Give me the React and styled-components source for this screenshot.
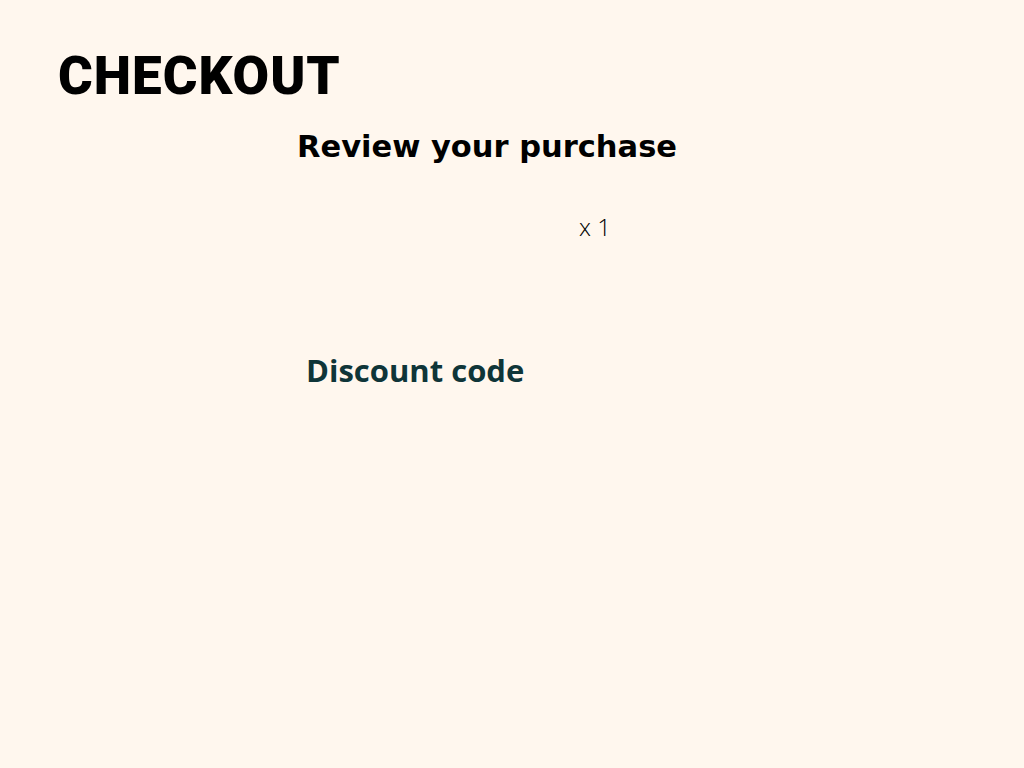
import React from "react";
import styled, { createGlobalStyle } from "styled-components";

const Global = createGlobalStyle`
  html, body { margin: 0; padding: 0; background: #fff7ee; }
  body { font-family: "DejaVu Sans", "Noto Sans", sans-serif; }
`;

const Page = styled.div`
  min-height: 768px;
  background: #fff7ee;
  padding: 44px 58px 0;
  box-sizing: border-box;
`;

const Title = styled.h1`
  margin: 0;
  font-family: Roboto, "DejaVu Sans", sans-serif;
  font-weight: 900;
  font-size: 53px;
  line-height: 64px;
  letter-spacing: 1px;
  color: #000;
`;

const Column = styled.main`
  width: 430px;
  margin: 17px auto 0;
  display: flex;
  flex-direction: column;
`;

const SectionTitle = styled.h2`
  margin: 0;
  font-family: "DejaVu Sans", sans-serif;
  font-weight: 700;
  font-size: 30.5px;
  line-height: 44px;
  color: #000;
`;

const ItemRow = styled.div`
  display: flex;
  align-items: center;
  height: 60px;
  margin-top: 27px;
  padding-left: 282px;
`;

const Qty = styled.span`
  font-family: "Open Sans", sans-serif;
  font-weight: 300;
  font-size: 24px;
  color: #000;
`;

const DiscountLabel = styled.h3`
  margin: 94px 0 0 9px;
  font-family: "Open Sans", sans-serif;
  font-weight: 700;
  font-size: 31px;
  line-height: 40px;
  color: #0f3538;
`;

export default function App() {
  return (
    <>
      <Global />
      <Page>
        <Title>CHECKOUT</Title>
        <Column>
          <SectionTitle>Review your purchase</SectionTitle>
          <ItemRow>
            <Qty>x 1</Qty>
          </ItemRow>
          <DiscountLabel>Discount code</DiscountLabel>
        </Column>
      </Page>
    </>
  );
}
